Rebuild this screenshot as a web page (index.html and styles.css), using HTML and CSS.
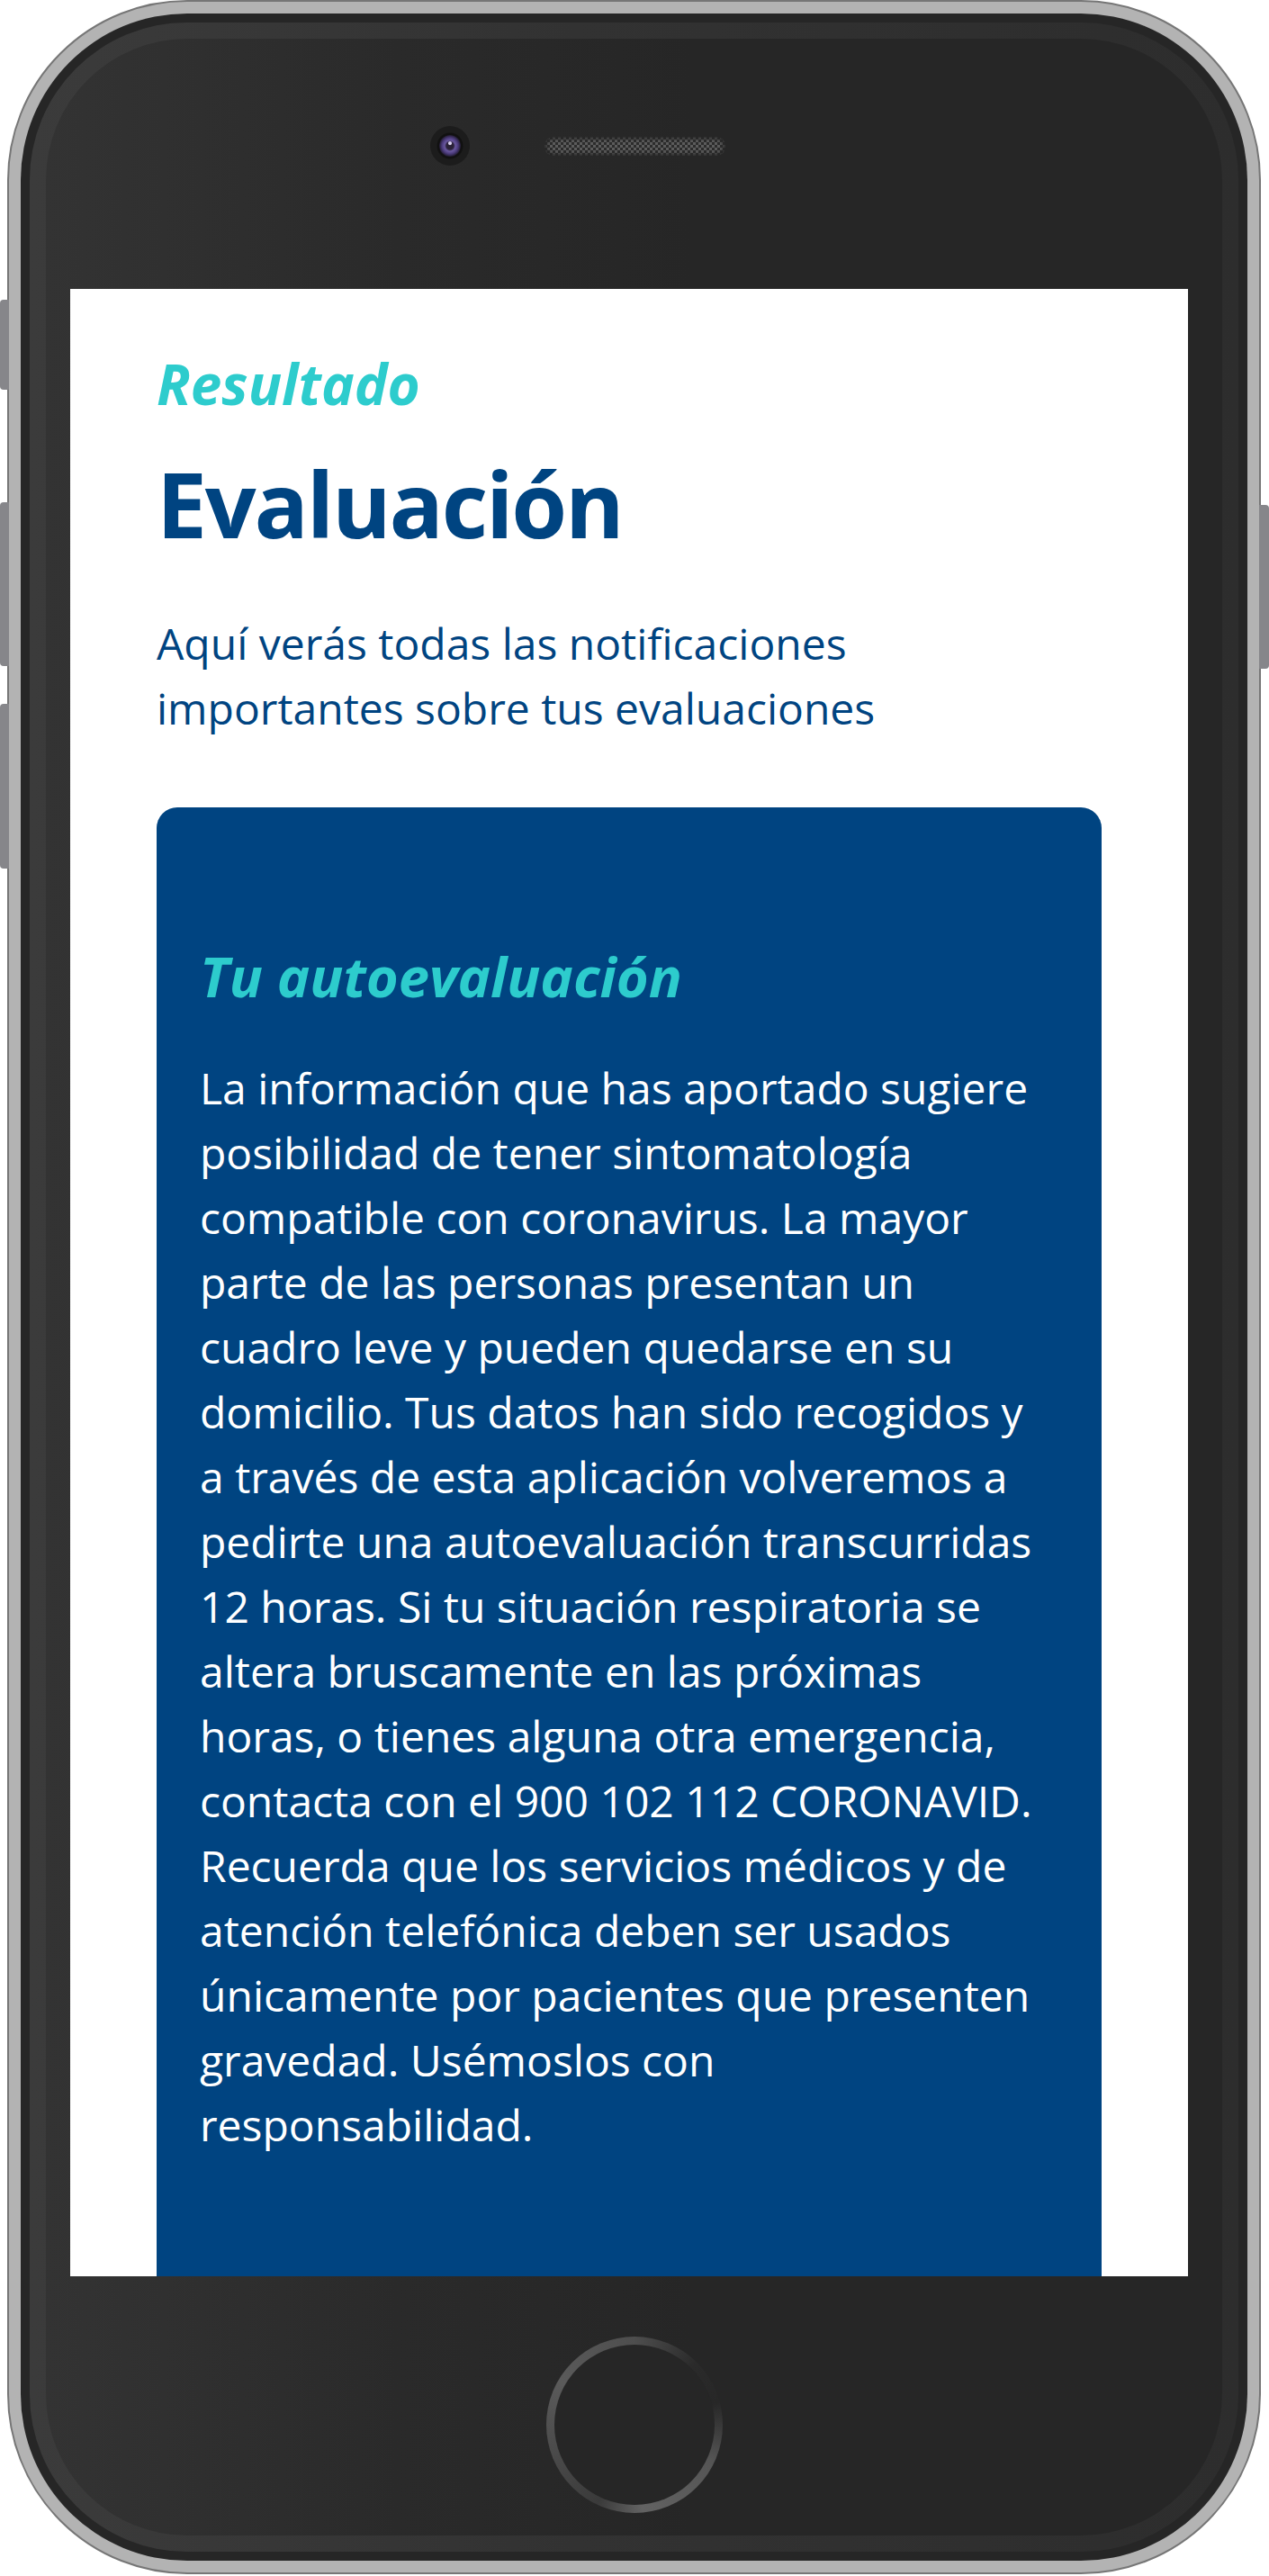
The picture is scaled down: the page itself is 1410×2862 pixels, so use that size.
FILE: index.html
```html
<!DOCTYPE html>
<html lang="es">
<head>
<meta charset="utf-8">
<title>Evaluación</title>
<link rel="stylesheet" href="styles.css">
</head>
<body>
<div class="phone">
  <span class="side-btn side-btn--l1"></span>
  <span class="side-btn side-btn--l2"></span>
  <span class="side-btn side-btn--l3"></span>
  <span class="side-btn side-btn--r1"></span>
  <div class="frame">
    <div class="bezel">
      <div class="face">
        <div class="face-top">
          <div class="camera"><div class="lens"></div></div>
          <div class="speaker"></div>
        </div>
        <main class="screen">
          <p class="eyebrow">Resultado</p>
          <h1 class="title">Evaluación</h1>
          <p class="lead">Aquí verás todas las notificaciones<br>importantes sobre tus evaluaciones</p>
          <section class="card">
            <h2 class="card-title">Tu autoevaluación</h2>
            <p class="card-text">La información que has aportado sugiere<br>posibilidad de tener sintomatología<br>compatible con coronavirus. La mayor<br>parte de las personas presentan un<br>cuadro leve y pueden quedarse en su<br>domicilio. Tus datos han sido recogidos y<br>a través de esta aplicación volveremos a<br>pedirte una autoevaluación transcurridas<br>12 horas. Si tu situación respiratoria se<br>altera bruscamente en las próximas<br>horas, o tienes alguna otra emergencia,<br>contacta con el 900 102 112 CORONAVID.<br>Recuerda que los servicios médicos y de<br>atención telefónica deben ser usados<br>únicamente por pacientes que presenten<br>gravedad. Usémoslos con<br>responsabilidad.</p>
          </section>
        </main>
        <div class="face-bottom">
          <div class="home"><div class="home-inner"></div></div>
        </div>
      </div>
    </div>
  </div>
</div>
</body>
</html>
```
FILE: styles.css
```css
* { box-sizing: border-box; }
html, body { margin: 0; padding: 0; background: #ffffff; }
body { width: 1410px; height: 2862px; overflow: hidden; font-family: "Open Sans", "Noto Sans", sans-serif; }

.phone {
  position: relative;
  margin-left: 8px;
  width: 1393px;
  height: 2860px;
  border: 2px solid #767676;
  border-radius: 200px;
  background: #b3b3b3;
  padding: 13px;
}
.side-btn {
  position: absolute;
  width: 10px;
  background: #86868a;
  border-radius: 4px 0 0 4px;
}
.side-btn--l1 { left: -10px; top: 331px; height: 100px; }
.side-btn--l2 { left: -10px; top: 556px; height: 182px; }
.side-btn--l3 { left: -10px; top: 780px; height: 183px; }
.side-btn--r1 { right: -11px; top: 559px; height: 182px; width: 11px; border-radius: 0 4px 4px 0; }

.frame {
  height: 100%;
  background: #262626;
  border-radius: 185px;
  padding: 10px;
}
.bezel {
  height: 100%;
  border-radius: 175px;
  background: linear-gradient(90deg, #3b3b3b 0%, #323232 45%, #2d2d2d 100%);
  padding: 18px;
}
.face {
  height: 100%;
  border-radius: 157px;
  background: linear-gradient(90deg, #333333 0%, #2a2a2a 30%, #262626 55%, #262626 100%);
  display: flex;
  flex-direction: column;
}
.face-top {
  flex: none;
  height: 278px;
  padding: 97px 0 0 427px;
  display: flex;
  align-items: flex-start;
  gap: 83px;
}
.camera {
  width: 44px;
  height: 44px;
  border-radius: 50%;
  background: radial-gradient(circle, #111 0 14px, #1c1c1c 15px 22px);
  display: flex;
  align-items: center;
  justify-content: center;
}
.lens {
  width: 24px;
  height: 24px;
  border-radius: 50%;
  background:
    radial-gradient(circle at 50% 38%, #d8d0f0 0 1.5px, transparent 2.5px),
    radial-gradient(circle, #2a2238 0 4px, #6a58a0 6px, #4a3a7a 9px, #221c30 12px);
}
.speaker {
  margin-top: 12px;
  width: 201px;
  height: 21px;
  border-radius: 11px;
  background: repeating-conic-gradient(#5c5c5c 0 25%, #2c2c2c 0 50%) 0 0 / 6px 6px;
  box-shadow: inset 0 0 4px 2px #262626;
}

.screen {
  flex: none;
  margin-left: 27px;
  width: 1242px;
  height: 2208px;
  background: #ffffff;
  overflow: hidden;
  padding: 68px 96px 0;
}
.eyebrow {
  margin: 0;
  font-size: 62px;
  line-height: 1.2;
  font-style: italic;
  font-weight: 700;
  color: #2dcccd;
}
.title {
  margin: 36px 0 0;
  font-size: 100px;
  line-height: 1.2;
  font-weight: 700;
  letter-spacing: -2.2px;
  color: #004481;
}
.lead {
  margin: 60px 0 0;
  font-size: 48px;
  line-height: 72px;
  font-weight: 400;
  color: #004481;
}
.card {
  margin-top: 74px;
  background: #004481;
  border-radius: 23px;
  padding: 148px 48px 200px;
}
.card-title {
  margin: 0;
  font-size: 61.5px;
  line-height: 78px;
  font-style: italic;
  font-weight: 700;
  color: #2dcccd;
}
.card-text {
  margin: 50px 0 0;
  font-size: 48px;
  line-height: 72px;
  color: #ffffff;
  white-space: nowrap;
}

.face-bottom {
  flex: 1;
  display: flex;
  justify-content: center;
  padding-top: 67px;
}
.home {
  width: 196px;
  height: 196px;
  border-radius: 50%;
  padding: 9px;
  background: conic-gradient(from 0deg, #4e4e4e 0deg, #2a2a2a 45deg, #272727 75deg, #555555 115deg, #626262 175deg, #3a3a3a 205deg, #4a4a4a 250deg, #5a5a5a 300deg, #4e4e4e 360deg);
}
.home-inner {
  width: 100%;
  height: 100%;
  border-radius: 50%;
  background: #262626;
}
```
